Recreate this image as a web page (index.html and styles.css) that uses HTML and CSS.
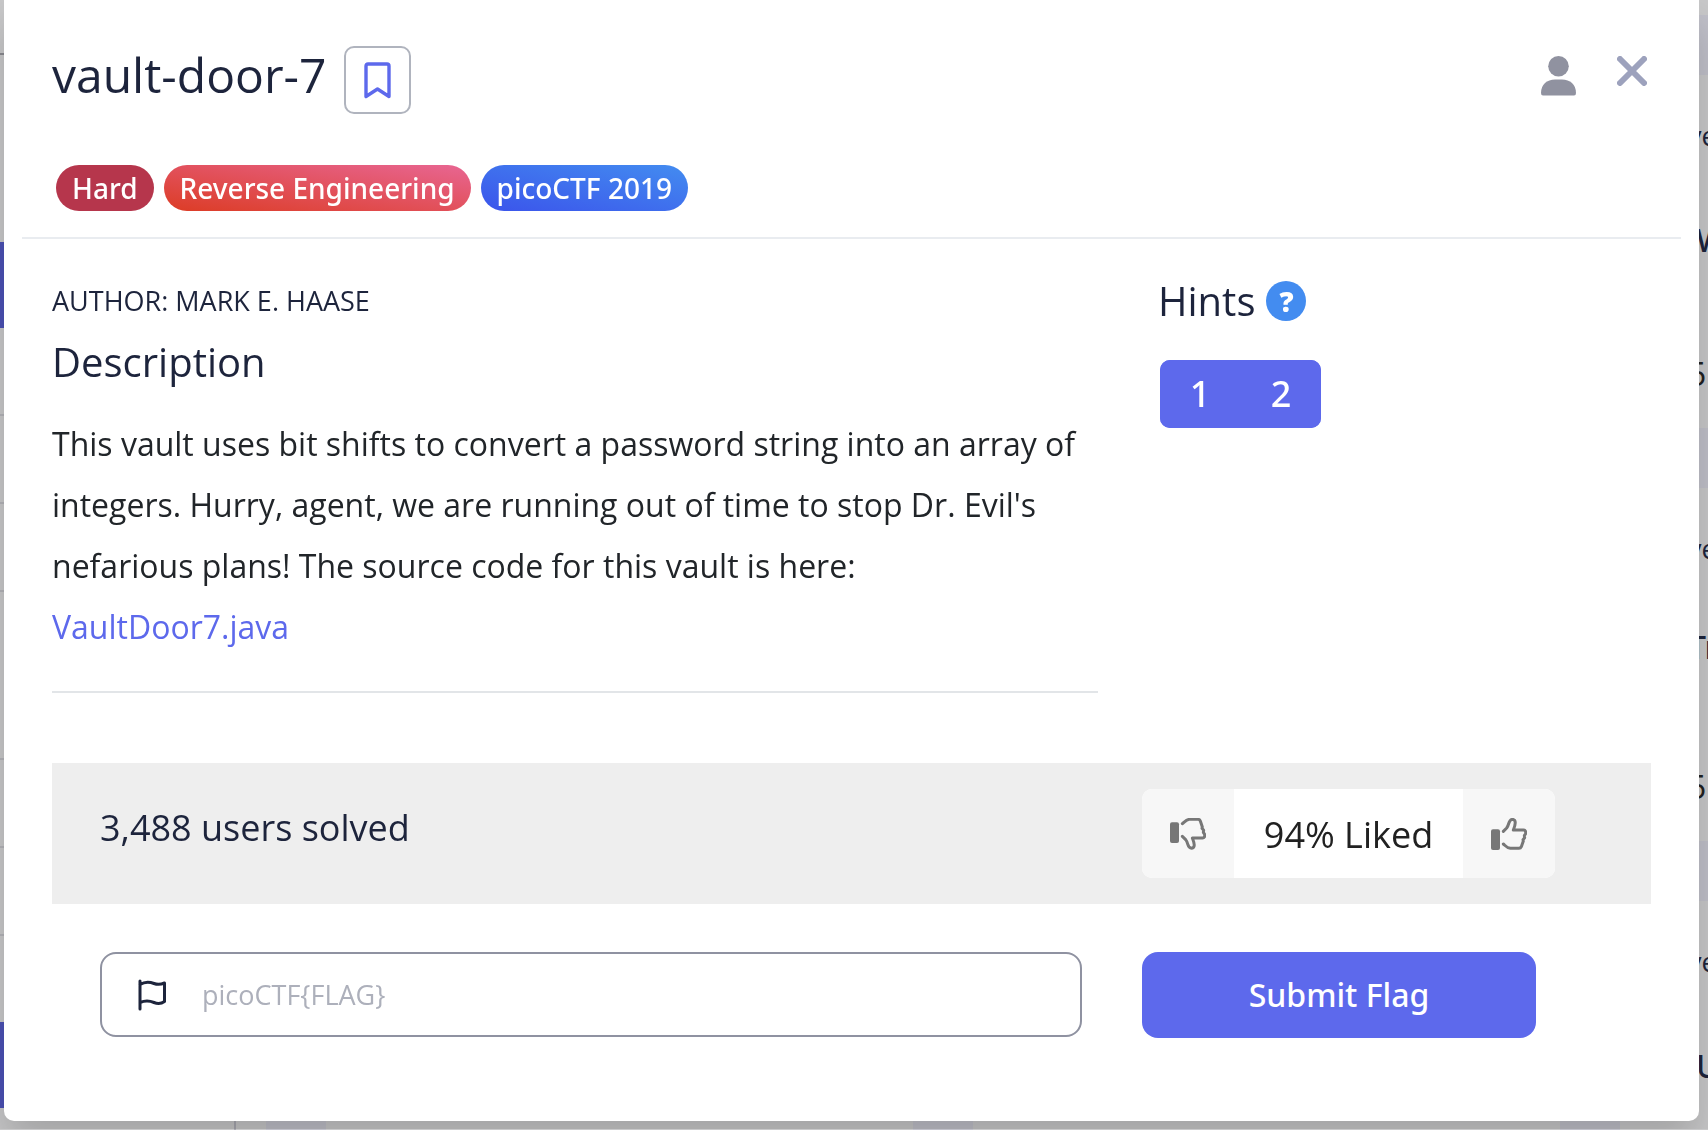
FILE: index.html
```html
<!DOCTYPE html>
<html lang="en">
<head>
<meta charset="utf-8">
<meta name="viewport" content="width=device-width, initial-scale=1">
<title>vault-door-7</title>
<link rel="stylesheet" href="styles.css">
</head>
<body>
<div class="backdrop" aria-hidden="true">
  <div class="sidebar">
    <div class="side-top"></div>
    <div class="side-active"></div>
    <div class="side-row"></div>
    <div class="side-row"></div>
    <div class="side-row"></div>
    <div class="side-row side-row-tall"></div>
    <div class="side-row"></div>
    <div class="side-row"></div>
    <div class="side-row side-row-last"></div>
    <div class="side-active"></div>
  </div>
  <div class="card-grid">
    <div class="card"></div><div class="card"></div>
    <div class="card"><span class="card-tag">ve</span><span class="card-title card-title-inset">W</span><span class="card-count">5</span></div>
    <div class="card"></div><div class="card"></div>
    <div class="card"><span class="card-tag">ve</span><span class="card-title card-title-high">Tr</span><span class="card-count">5</span></div>
    <div class="card"></div><div class="card"></div>
    <div class="card"><span class="card-tag">ve</span><span class="card-title card-title-inset">U</span></div>
  </div>
</div>

<main class="modal" role="dialog" aria-labelledby="title">
  <header class="modal-header">
    <div class="title-row">
      <h1 class="title" id="title">vault-door-7</h1>
      <button class="bookmark" type="button" aria-label="Bookmark">
        <svg width="27" height="37" viewBox="0 0 27 37" fill="none" stroke="#5d69ec" stroke-width="3.400" stroke-linejoin="round"><path d="M2 34.500V4q0-2 2-2h19q2 0 2 2v30.500L13.500 27z"/></svg>
      </button>
      <div class="header-actions">
        <svg class="person" width="35" height="40" viewBox="0 0 35 39" preserveAspectRatio="none" fill="#9092a0"><ellipse cx="17.500" cy="10" rx="10.300" ry="10"/><path d="M0 36C0 28 6 23 14 23h7c8 0 14 5 14 13q0 2.500-2 2.500H2Q0 38.500 0 36z"/></svg>
        <button class="close" type="button" aria-label="Close">
          <svg width="30" height="30" viewBox="0 0 30 30" fill="none" stroke="#9da2bd" stroke-width="6" stroke-linecap="round"><path d="M3 3l24 24M27 3L3 27"/></svg>
        </button>
      </div>
    </div>
    <div class="badges">
      <span class="badge badge-hard">Hard</span>
      <span class="badge badge-category">Reverse Engineering</span>
      <span class="badge badge-event">picoCTF 2019</span>
    </div>
  </header>

  <div class="modal-body">
    <div class="details">
      <section>
        <div class="author">AUTHOR: MARK E. HAASE</div>
        <h2 class="heading">Description</h2>
        <p class="description">This vault uses bit shifts to convert a password string into an array of integers. Hurry, agent, we are running out of time to stop Dr. Evil's nefarious plans! The source code for this vault is here: <a class="link" href="#">VaultDoor7.java</a></p>
        <hr class="rule">
      </section>
      <aside>
        <div class="hints-head">
          <h2 class="hints-title">Hints</h2>
          <span class="help">?</span>
        </div>
        <div class="hint-group">
          <button class="hint" type="button">1</button><button class="hint" type="button">2</button>
        </div>
      </aside>
    </div>

    <div class="stats">
      <div class="solved">3,488 users solved</div>
      <div class="likes">
        <button class="vote" type="button" aria-label="Dislike">
          <svg width="36" height="32" viewBox="0 0 108 96"><rect y="13" width="27" height="62" rx="6" fill="#777"/><path d="M37 17C44 12 48 5 58 4H84Q89 4 91 9L97 27L96 31L101 37L100 43L104 49Q105 60 98 60H67C74 77 76 89 65 91C51 90 56 76 47 65L37 55" fill="none" stroke="#777" stroke-width="9" stroke-linecap="round" stroke-linejoin="round"/></svg>
        </button>
        <div class="liked">94% Liked</div>
        <button class="vote" type="button" aria-label="Like">
          <svg width="36" height="32" viewBox="0 0 108 96"><rect y="34" width="27" height="62" rx="6" fill="#777"/><path d="M37 40L47 30C56 19 51 5 65 4C76 6 74 18 67 36H98Q105 36 104 47L100 53L101 59L96 65L97 69L91 86Q89 91 84 91H58C48 90 44 84 37 78" fill="none" stroke="#777" stroke-width="9" stroke-linecap="round" stroke-linejoin="round"/></svg>
        </button>
      </div>
    </div>

    <form class="submit-row">
      <label class="flag-field">
        <svg width="28" height="32" viewBox="0 0 28 32" fill="none" stroke="#1d243c" stroke-width="3" stroke-linecap="round" stroke-linejoin="round"><path d="M2 2v28M2 5.500C6 3 11 2.500 16 4.500c4 1.500 7 1 10.500-.5v18.500c-3.500 2.500-7 2.500-10.500 1-5-2-9-2-14 0"/></svg>
        <input class="flag-input" type="text" placeholder="picoCTF{FLAG}" aria-label="Flag">
      </label>
      <button class="submit" type="button">Submit Flag</button>
    </form>
  </div>
</main>
</body>
</html>
```

FILE: styles.css
```css
* { box-sizing: border-box; }

body {
  margin: 0;
  font-family: "Open Sans", "Noto Sans", sans-serif;
  color: #1d243c;
  background: #c8c8c9;
}

h1, h2, p { margin: 0; font-weight: 400; }

button { border: 0; padding: 0; font: inherit; cursor: pointer; }

svg { display: block; }

/* Dimmed page behind the dialog */
.backdrop {
  position: fixed;
  inset: 0;
  display: flex;
  overflow: hidden;
}

.sidebar {
  flex: none;
  width: 236px;
  border-right: 2px solid #a9a9b1;
}

.side-top { height: 55px; border-bottom: 2px solid #8a8a90; margin-bottom: 187px; }
.side-active { height: 86px; background: #4b51b5; }
.side-row { height: 88px; border-bottom: 2px solid #b3b3b8; }
.side-row-tall { height: 168px; }
.side-row-last { height: 86px; border-bottom: 0; }

.card-grid {
  flex: none;
  display: grid;
  grid-template-columns: repeat(3, 587px);
  grid-auto-rows: 353px;
  gap: 60px;
  margin: 15px 0 0 30px;
  padding: 60px;
  background: #c0c0c9;
}

.card {
  display: flex;
  flex-direction: column;
  padding: 46px 0 0 68px;
  background: #c8c8c9;
  overflow: hidden;
}

.card-tag { font-size: 27px; line-height: 30px; }

.card-title {
  margin: 72px 0 100px;
  font: 500 32px/34px "Noto Sans", sans-serif;
}

.card-title-inset { padding-left: 8px; }
.card-title-high { margin: 66px 0 106px; }
.card-count { font-size: 32px; line-height: 34px; color: #212121; }

/* Dialog */
.modal {
  position: relative;
  margin: 0 9px 8px 4px;
  padding-bottom: 83px;
  border-radius: 0 0 10px 10px;
  background: #fff;
  box-shadow: 0 24px 40px rgba(0, 0, 0, 0.18);
}

.modal-header {
  margin: 0 18px;
  padding: 46px 30px 26px;
  border-bottom: 2px solid #e9ecf0;
}

.title-row { display: flex; height: 68px; }
.title { font-size: 48px; line-height: 58px; }

.bookmark {
  display: grid;
  place-items: center;
  width: 67px;
  height: 68px;
  margin-left: 18px;
  border: 2px solid #b0b4be;
  border-radius: 10px;
  background: #fff;
}

.header-actions { display: flex; align-items: flex-start; gap: 41px; margin-left: auto; padding: 10px 4px 0 0; }
.close { background: none; }

.badges { display: flex; gap: 10px; margin: 51px 0 0 4px; }

.badge {
  padding: 0 16px;
  border-radius: 23px;
  font: 500 28px/46px "Noto Sans", sans-serif;
  color: #fff;
}

.badge-hard { background: #b6364c; }
.badge-category { background: linear-gradient(to top right, #dc3c25, #e86693); }
.badge-event { background: linear-gradient(to top right, #3b54eb, #438cf0); }

.modal-body { padding: 0 48px; }

.details {
  display: grid;
  grid-template-columns: minmax(0, 1fr) 493px;
  gap: 60px;
  padding-top: 42px;
}

.author { font-size: 27px; line-height: 40px; }
.heading { margin-top: 16px; font-size: 40px; line-height: 50px; }
.description { margin-top: 26px; font-size: 32px; line-height: 61px; color: #212529; }
.link { color: #5d69ec; text-decoration: none; }
.rule { margin: 34px 0 0; border: 0; border-top: 2px solid #e2e5e8; }

.hints-head { display: flex; align-items: center; gap: 11px; height: 40px; }
.hints-title { font-size: 40px; line-height: 40px; }

.help {
  width: 40px;
  border-radius: 20px;
  background: #438cf0;
  color: #fff;
  font-size: 28px;
  font-weight: 800;
  line-height: 40px;
  text-align: center;
}

.hint-group {
  display: inline-flex;
  margin: 39px 0 0 2px;
  border-radius: 10px;
  overflow: hidden;
  background: #5d69ec;
  gap: 1px;
}

.hint {
  width: 80px;
  height: 68px;
  background: #5d69ec;
  color: #fff;
  font: 500 36px/68px "Noto Sans", sans-serif;
}

.stats, .submit-row {
  display: grid;
  grid-template-columns: minmax(0, 1fr) 509px;
  gap: 60px;
  padding-left: 48px;
}

.stats {
  margin-top: 70px;
  padding-top: 26px;
  padding-bottom: 26px;
  background: #eee;
}

.solved { font-size: 36px; line-height: 78px; }

.likes {
  display: flex;
  width: 413px;
  height: 89px;
  border-radius: 10px;
  overflow: hidden;
  background: #fff;
}

.vote { display: grid; place-items: center; width: 92px; background: #f7f7f7; }
.liked { flex: 1; font-size: 36px; line-height: 92px; text-align: center; color: #212121; }

.submit-row { margin-top: 48px; }

.flag-field {
  display: flex;
  align-items: center;
  height: 85px;
  padding: 0 36px;
  border: 2px solid #8f92a1;
  border-radius: 16px;
}

.flag-input {
  flex: 1;
  min-width: 0;
  margin-left: 36px;
  padding: 0;
  border: 0;
  outline: 0;
  background: none;
  font: 27px/40px "Open Sans", "Noto Sans", sans-serif;
  color: #1d243c;
}

.flag-input::placeholder { color: #adb0bb; opacity: 1; }

.submit {
  width: 394px;
  height: 86px;
  border-radius: 16px;
  background: #5d69ec;
  color: #fff;
  font: 500 32px/86px "Noto Sans", sans-serif;
}
```
